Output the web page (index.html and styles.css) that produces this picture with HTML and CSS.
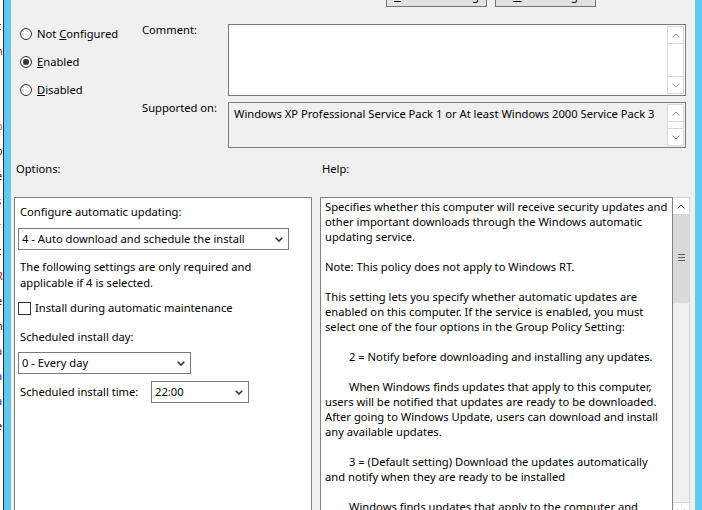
FILE: index.html
```html
<!DOCTYPE html>
<html lang="en">
<head>
<meta charset="utf-8">
<title>Configure Automatic Updates</title>
<link rel="stylesheet" href="styles.css">
</head>
<body>
<div class="window">
  <div class="edge">
    <div class="edge-text">
      <span class="k">c</span><span class="r">n</span><span class="k">i</span><span class="b">t</span><span class="o">p</span><span class="k">o</span><span class="k">e</span><span class="b">s</span><span class="k">r</span><span class="k">c</span><span class="r">R</span><span class="k">e</span><span class="k">n</span><span class="b">a</span><span class="b">a</span><span class="b">a</span><span class="k">e</span><span class="k">i</span><span class="k">l</span>
    </div>
  </div>
  <div class="accent"></div>
  <main class="dialog">
    <div class="nav-buttons">
      <button class="btn"><u>P</u>revious Setting</button>
      <button class="btn"><u>N</u>ext Setting</button>
    </div>

    <div class="settings">
      <div class="radios">
        <label class="radio"><span class="circle"></span><span>Not <u>C</u>onfigured</span></label>
        <label class="radio"><span class="circle checked"></span><span><u>E</u>nabled</span></label>
        <label class="radio"><span class="circle"></span><span><u>D</u>isabled</span></label>
      </div>

      <div class="field-label comment-label">Comment:</div>
      <div class="textbox comment-box">
        <div class="vscroll">
          <div class="sb-btn up"><svg width="8" height="5" viewBox="0 0 8 5"><polyline points="0.5,4.5 4,1 7.5,4.5" /></svg></div>
          <div class="sb-track"></div>
          <div class="sb-btn down"><svg width="8" height="5" viewBox="0 0 8 5"><polyline points="0.5,0.5 4,4 7.5,0.5" /></svg></div>
        </div>
      </div>

      <div class="field-label supported-label">Supported on:</div>
      <div class="textbox supported-box">
        <div class="supported-text">Windows XP Professional Service Pack 1 or At least Windows 2000 Service Pack 3</div>
        <div class="vscroll">
          <div class="sb-btn up"><svg width="8" height="5" viewBox="0 0 8 5"><polyline points="0.5,4.5 4,1 7.5,4.5" /></svg></div>
          <div class="sb-track"></div>
          <div class="sb-btn down"><svg width="8" height="5" viewBox="0 0 8 5"><polyline points="0.5,0.5 4,4 7.5,0.5" /></svg></div>
        </div>
      </div>
    </div>

    <div class="section-heads">
      <span class="head options-head">Options:</span>
      <span class="head">Help:</span>
    </div>

    <div class="panels">
      <div class="options-panel">
        <div class="opt-label">Configure automatic updating:</div>
        <div class="select wide"><span>4 - Auto download and schedule the install</span><svg class="chev" width="8" height="5" viewBox="0 0 8 5"><polyline points="0.7,0.7 4,4 7.3,0.7" /></svg></div>
        <div class="note">The following settings are only required and<br>applicable if 4 is selected.</div>
        <div class="check-row"><span class="checkbox"></span><span>Install during automatic maintenance</span></div>
        <div class="opt-label day-label">Scheduled install day:</div>
        <div class="select day"><span>0 - Every day</span><svg class="chev" width="8" height="5" viewBox="0 0 8 5"><polyline points="0.7,0.7 4,4 7.3,0.7" /></svg></div>
        <div class="time-row">
          <span class="time-label">Scheduled install time:</span>
          <div class="select time"><span>22:00</span><svg class="chev" width="8" height="5" viewBox="0 0 8 5"><polyline points="0.7,0.7 4,4 7.3,0.7" /></svg></div>
        </div>
      </div>

      <div class="help-box">
        <div class="help-text">
          <p>Specifies whether this computer will receive security updates and<br>other important downloads through the Windows automatic<br>updating service.</p>
          <p>Note: This policy does not apply to Windows RT.</p>
          <p>This setting lets you specify whether automatic updates are<br>enabled on this computer. If the service is enabled, you must<br>select one of the four options in the Group Policy Setting:</p>
          <p class="indent">2 = Notify before downloading and installing any updates.</p>
          <p class="indent">When Windows finds updates that apply to this computer,<br>users will be notified that updates are ready to be downloaded.<br>After going to Windows Update, users can download and install<br>any available updates.</p>
          <p class="indent">3 = (Default setting) Download the updates automatically<br>and notify when they are ready to be installed</p>
          <p class="indent">Windows finds updates that apply to the computer and<br>downloads them in the background.</p>
        </div>
      </div>
      <div class="help-scroll">
        <div class="sb-btn up"><svg width="8" height="5" viewBox="0 0 8 5"><polyline points="0.5,4.5 4,1 7.5,4.5" /></svg></div>
        <div class="thumb"><span class="grip"></span><span class="grip"></span><span class="grip"></span></div>
        <div class="help-track"></div>
        <div class="sb-btn down"><svg width="8" height="5" viewBox="0 0 8 5"><polyline points="0.5,0.5 4,4 7.5,0.5" /></svg></div>
      </div>
    </div>
  </main>
  <div class="accent right"></div>
</div>
</body>
</html>
```

FILE: styles.css
```css
html, body {
  margin: 0;
  padding: 0;
  height: 510px;
  overflow: hidden;
  background: #f0f0f0;
}

.window {
  display: flex;
  height: 510px;
  overflow: hidden;
  font-family: "Noto Sans", "DejaVu Sans", sans-serif;
  font-size: 11.2px;
  line-height: 15px;
  color: #000;
}

u { text-decoration: underline; text-underline-offset: 1px; }

/* left edge of background window */
.edge {
  width: 3px;
  flex: none;
  background: #fff;
  border-right: 1px solid #2e2e2e;
  overflow: hidden;
}
.edge-text {
  display: flex;
  flex-direction: column;
  margin-left: -4px;
  padding-top: 20px;
  font-size: 11px;
  line-height: 11px;
  gap: 14px;
}
.edge-text .k { color: #1a1a1a; }
.edge-text .r { color: #8a2a2a; }
.edge-text .b { color: #1d3f9e; }
.edge-text .o { color: #c06a1a; }

.accent {
  width: 7px;
  flex: none;
  background: #62c8ec;
}

.dialog {
  flex: 1;
  display: flex;
  flex-direction: column;
  min-width: 0;
}

/* top buttons (clipped) */
.nav-buttons {
  display: flex;
  justify-content: flex-end;
  gap: 8px;
  padding-right: 99px;
  margin-top: -16px;
  height: 23px;
}
.btn {
  width: 101px;
  height: 23px;
  box-sizing: border-box;
  border: 1px solid #737373;
  background: #e1e1e1;
  font: inherit;
  color: #000;
  padding: 0 0 1px;
  line-height: 15px;
}

/* settings grid */
.settings {
  display: grid;
  grid-template-columns: 122px 86px 458px;
  grid-template-rows: 72px 46px;
  row-gap: 6px;
  margin-top: 17px;
  padding-left: 9px;
}
.radios {
  grid-row: 1 / span 2;
  grid-column: 1;
  display: flex;
  flex-direction: column;
  margin-top: -4px;
}
.radio {
  height: 28px;
  display: flex;
  align-items: center;
  gap: 5px;
}
.radio > span:last-child { padding-bottom: 1px; }
.circle {
  width: 12px;
  height: 12px;
  box-sizing: border-box;
  border: 1px solid #333;
  border-radius: 50%;
  background: #fff;
  display: flex;
  align-items: center;
  justify-content: center;
}
.circle.checked::after {
  content: "";
  width: 6px;
  height: 6px;
  border-radius: 50%;
  background: #333;
}

.field-label { align-self: start; }
.comment-label { margin-top: -2px; }
.supported-label { margin-top: -2px; }

.textbox {
  box-sizing: border-box;
  border: 1px solid #7a7a7a;
  padding: 1px;
  display: flex;
  justify-content: flex-end;
}
.comment-box { background: #fff; }
.supported-box { background: #f0f0f0; justify-content: space-between; }
.supported-text {
  padding: 2px 0 0 4px;
  white-space: nowrap;
}

.vscroll {
  width: 17px;
  box-sizing: border-box;
  border: 1px solid #d9d9d9;
  display: flex;
  flex-direction: column;
  background: #fff;
  flex: none;
}
.sb-btn {
  height: 16px;
  display: flex;
  align-items: center;
  justify-content: center;
  background: #fff;
  flex: none;
}
.sb-btn.up { border-bottom: 1px solid #d9d9d9; }
.sb-btn.down { border-top: 1px solid #d9d9d9; }
.sb-track { flex: 1; }
.sb-btn svg polyline {
  fill: none;
  stroke: #8c8c8c;
  stroke-width: 1;
}

/* section heads */
.section-heads {
  display: flex;
  margin-top: 13px;
}
.head { line-height: 15px; }
.options-head {
  width: 306px;
  padding-left: 5px;
}

/* panels */
.panels {
  display: flex;
  margin-top: 21px;
  margin-left: 3px;
}
.options-panel {
  width: 298px;
  height: 330px;
  flex: none;
  box-sizing: border-box;
  border: 1px solid #828282;
  background: #fff;
  padding: 6px 3px;
}
.opt-label {
  line-height: 16px;
  padding-left: 2px;
}
.select {
  height: 22px;
  box-sizing: border-box;
  border: 1px solid #7a7a7a;
  background: #fff;
  display: flex;
  align-items: center;
  justify-content: space-between;
  padding: 0 5px 0 3px;
  white-space: nowrap;
}
.select > span { margin-top: -2px; }
.chev polyline {
  fill: none;
  stroke: #333;
  stroke-width: 1.6;
}
.select.wide { width: 271px; margin-top: 8px; }
.note {
  margin-top: 9px;
  line-height: 16px;
  padding-left: 2px;
}
.check-row {
  margin-top: 9px;
  height: 16px;
  display: flex;
  align-items: center;
  gap: 4px;
}
.check-row > span:last-child { padding-bottom: 1px; }
.checkbox {
  width: 13px;
  height: 13px;
  box-sizing: border-box;
  border: 1px solid #333;
  background: #fff;
}
.day-label { margin-top: 13px; }
.select.day { width: 173px; margin-top: 7px; }
.time-row {
  margin-top: 7px;
  display: flex;
  align-items: center;
}
.time-label {
  width: 133px;
  box-sizing: border-box;
  padding-left: 2px;
  padding-bottom: 2px;
}
.select.time { width: 98px; }

.help-box {
  margin-left: 8px;
  width: 353px;
  height: 330px;
  flex: none;
  box-sizing: border-box;
  border: 1px solid #828282;
  background: #fff;
  padding: 1px 0 0 4px;
  overflow: hidden;
}
.help-text p {
  margin: 0 0 15px;
  white-space: nowrap;
}
.help-text p.indent { text-indent: 24px; }

.help-scroll {
  width: 17px;
  height: 330px;
  flex: none;
  box-sizing: border-box;
  border: 1px solid #d4d4d4;
  border-left: none;
  background: #f0f0f0;
  display: flex;
  flex-direction: column;
}
.help-scroll .sb-btn.up { border-bottom: 1px solid #d4d4d4; }
.help-scroll .sb-btn.down { border-top: 1px solid #d4d4d4; }
.help-scroll .sb-btn svg polyline { stroke: #606060; }
.thumb {
  height: 88px;
  flex: none;
  background: #dadada;
  display: flex;
  flex-direction: column;
  align-items: center;
  justify-content: center;
  gap: 2px;
  padding-bottom: 3px;
  box-sizing: border-box;
}
.grip {
  width: 7px;
  height: 1px;
  background: #606060;
}
.help-track {
  height: 199px;
  flex: none;
}
```
